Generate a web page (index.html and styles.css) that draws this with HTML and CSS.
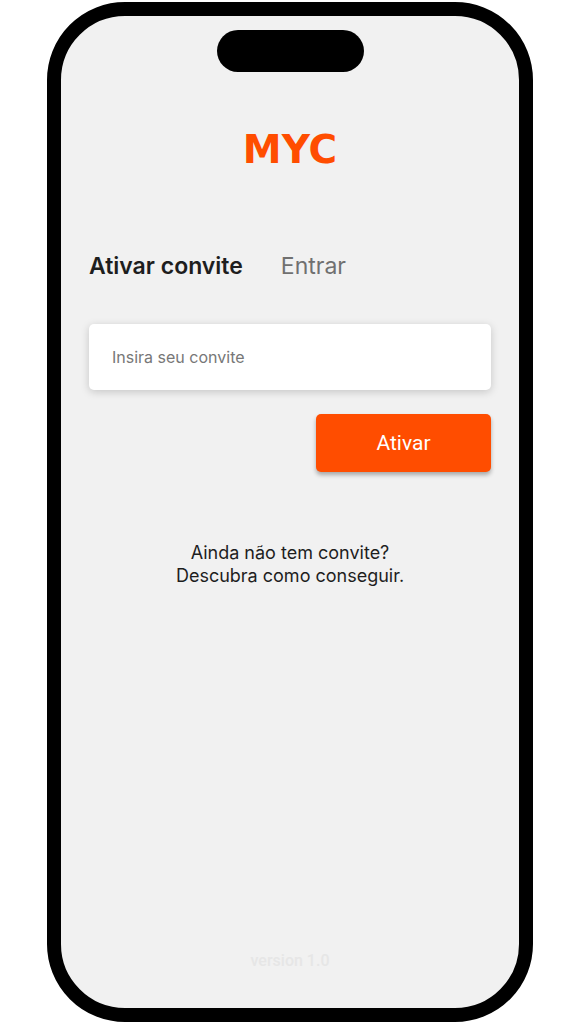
FILE: index.html
```html
<!DOCTYPE html>
<html lang="pt-BR">
<head>
<meta charset="utf-8">
<meta name="viewport" content="width=device-width, initial-scale=1">
<title>MYC</title>
<link rel="stylesheet" href="styles.css">
</head>
<body>
<div class="phone">
  <div class="island"></div>
  <h1 class="logo">MYC</h1>
  <main class="content">
    <nav class="tabs">
      <button class="tab tab-active" type="button">Ativar convite</button>
      <button class="tab" type="button">Entrar</button>
    </nav>
    <form class="form">
      <input class="field" type="text" placeholder="Insira seu convite" aria-label="Insira seu convite">
      <button class="submit" type="button">Ativar</button>
    </form>
    <a class="help" href="#">Ainda não tem convite?<br>Descubra como conseguir.</a>
  </main>
  <footer class="version">version 1.0</footer>
</div>
</body>
</html>
```
FILE: styles.css
```css
* {
  box-sizing: border-box;
}

body {
  margin: 0;
  padding: 2px 44px 2px 47px;
  background: #fff;
  font-family: Inter, "Liberation Sans", sans-serif;
  color: #1e1e1e;
}

.phone {
  display: flex;
  flex-direction: column;
  min-height: calc(100vh - 4px);
  padding: 14px 28px 37px;
  border: 14px solid #000;
  border-radius: 78px;
  background: #f1f1f1;
}

.island {
  align-self: center;
  width: 147px;
  height: 42px;
  border-radius: 21px;
  background: #000;
}

.logo {
  margin: 56px 0 0;
  font: 700 39px/44px "DejaVu Sans", sans-serif;
  text-align: center;
  color: #ff4d00;
}

.content {
  display: flex;
  flex-direction: column;
  flex: 1;
  padding-top: 80px;
}

.tabs {
  display: flex;
  gap: 38px;
}

.tab {
  padding: 0;
  border: 0;
  background: none;
  font: 400 23px/28px Inter, sans-serif;
  color: #707070;
}

.tab-active {
  font-weight: 600;
  color: #1e1e1e;
}

.form {
  display: flex;
  flex-direction: column;
  gap: 24px;
  margin-top: 44px;
}

.field {
  width: 100%;
  height: 66px;
  padding: 0 23px;
  border: 0;
  border-radius: 5px;
  background: #fff;
  box-shadow: 0 2px 8px rgba(0, 0, 0, 0.18);
  font: 400 16px/20px Inter, sans-serif;
  color: #1e1e1e;
}

.field::placeholder {
  color: #777;
  opacity: 1;
}

.submit {
  align-self: flex-end;
  width: 175px;
  height: 58px;
  border: 0;
  border-radius: 5px;
  background: #ff4d00;
  box-shadow: 0 3px 4px rgba(0, 0, 0, 0.3);
  font: 400 21px/24px Roboto, sans-serif;
  color: #fff;
}

.help {
  align-self: center;
  margin-top: 69px;
  font-size: 18px;
  line-height: 23px;
  text-align: center;
  text-decoration: none;
  color: #1e1e1e;
}

.version {
  font: 500 16px/20px Roboto, sans-serif;
  text-align: center;
  color: #e6e6e6;
}
```
